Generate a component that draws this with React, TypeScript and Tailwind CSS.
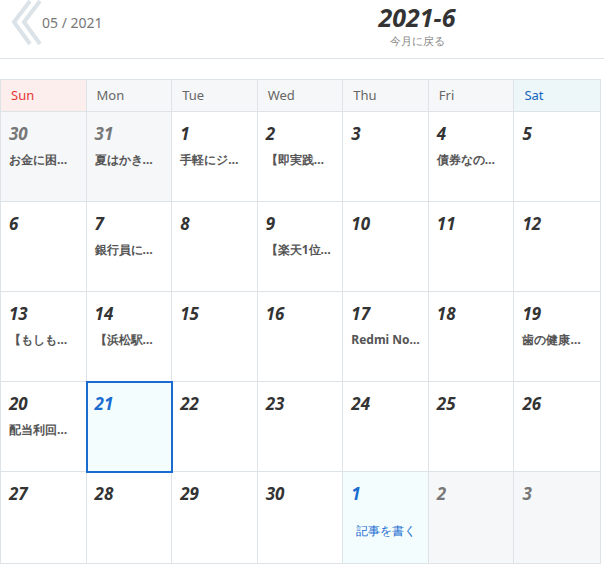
import React from "react";

type Cell = { d: number; t?: string; kind?: "prev" | "today" | "next" | "nextfirst" };
const rows: Cell[][] = [
  [{ d: 30, t: "お金に困…", kind: "prev" }, { d: 31, t: "夏はかき…", kind: "prev" }, { d: 1, t: "手軽にジ…" }, { d: 2, t: "【即実践…" }, { d: 3 }, { d: 4, t: "債券なの…" }, { d: 5 }],
  [{ d: 6 }, { d: 7, t: "銀行員に…" }, { d: 8 }, { d: 9, t: "【楽天1位…" }, { d: 10 }, { d: 11 }, { d: 12 }],
  [{ d: 13, t: "【もしも…" }, { d: 14, t: "【浜松駅…" }, { d: 15 }, { d: 16 }, { d: 17, t: "Redmi No…" }, { d: 18 }, { d: 19, t: "歯の健康…" }],
  [{ d: 20, t: "配当利回…" }, { d: 21, kind: "today" }, { d: 22 }, { d: 23 }, { d: 24 }, { d: 25 }, { d: 26 }],
  [{ d: 27 }, { d: 28 }, { d: 29 }, { d: 30 }, { d: 1, kind: "nextfirst" }, { d: 2, kind: "next" }, { d: 3, kind: "next" }],
];
const days = ["Sun", "Mon", "Tue", "Wed", "Thu", "Fri", "Sat"];
const num = "font-[family-name:'DejaVu_Serif',serif] italic font-bold text-[17px] leading-none";
const jp = "font-[family-name:'Noto_Sans_CJK_JP',sans-serif]";

export default function App() {
  return (
    <div className="w-[604px] h-[571px] bg-white overflow-hidden">
      <div className="h-[59px] border-b border-[#dde3e6] flex items-start pl-[8px]">
        <div className="flex items-center w-[300px]">
          <svg width="34" height="46" viewBox="0 0 34 46">
            <path d="M22 1 L6 22 L22 44" fill="none" stroke="#dbe3e8" strokeWidth="4" />
            <path d="M32 1 L16 22 L32 44" fill="none" stroke="#dbe3e8" strokeWidth="4" />
          </svg>
          <span className="text-[14px] text-[#777] font-[family-name:'Liberation_Serif',serif] -mt-[2px]">05 / 2021</span>
        </div>
        <div className="ml-[59px] w-[100px] flex flex-col items-center">
          <div className="font-[family-name:'DejaVu_Serif',serif] italic font-bold text-[25px] leading-[34px] text-[#333]">2021-6</div>
          <div className={`text-[11px] text-[#888] leading-[14px] ${jp}`}>今月に戻る</div>
        </div>
      </div>
      <div className="mt-[20px] w-[601px] border border-[#dde3e6] grid grid-cols-7">
        {days.map((n, i) => (
          <div key={n} className={`h-[32px] flex items-center pl-[10px] text-[13px] font-[family-name:'DejaVu_Sans',sans-serif] border-b border-[#dde3e6] ${i < 6 ? "border-r" : ""} ${i === 0 ? "bg-[#fdeeee] text-[#e53935]" : i === 6 ? "bg-[#edf6f9] text-[#1565c0]" : "bg-[#f5f7f9] text-[#666]"}`}>{n}</div>
        ))}
        {rows.map((r, ri) =>
          r.map((c, ci) => {
            const bg = c.kind === "prev" || c.kind === "next" ? "bg-[#f5f7f9]" : c.kind === "today" || c.kind === "nextfirst" ? "bg-[#f3fdfd]" : "bg-white";
            const col = c.kind === "today" || c.kind === "nextfirst" ? "text-[#1a6bd0]" : c.kind === "prev" || c.kind === "next" ? "text-[#777]" : "text-[#333]";
            return (
              <div key={`${ri}-${ci}`} className={`${ri === 4 ? "h-[91px]" : "h-[90px]"} ${bg} border-[#dde3e6] ${ri < 4 ? "border-b" : ""} ${ci < 6 ? "border-r" : ""} ${c.kind === "today" ? "outline-2 outline-[#1a6bd0] -outline-offset-1 relative" : ""} pl-[8px] pt-[13px]`}>
                <div className={`${num} ${col}`}>{c.d}</div>
                {c.t && <div className={`mt-[9px] text-[12px] font-bold text-[#555] whitespace-nowrap ${jp}`}>{c.t}</div>}
                {c.kind === "nextfirst" && <div className={`mt-[20px] text-center pr-[8px] text-[12px] text-[#1a6bd0] ${jp}`}>記事を書く</div>}
              </div>
            );
          })
        )}
      </div>
    </div>
  );
}
